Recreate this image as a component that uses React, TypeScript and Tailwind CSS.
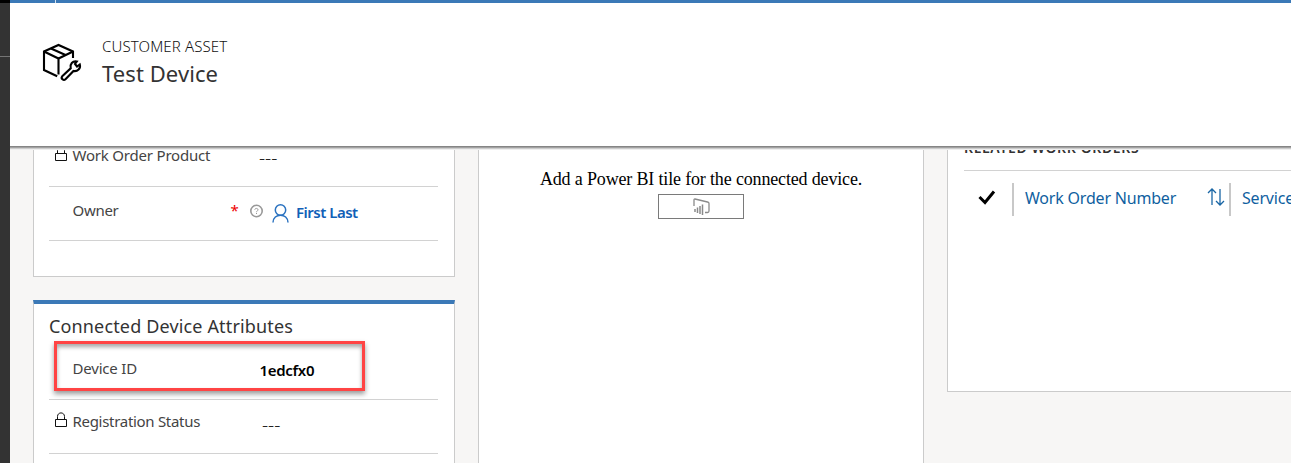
import type { ReactNode } from "react";

function AssetIcon() {
  return (
    <svg width="40" height="40" viewBox="0 0 40 40" fill="none" stroke="#000" strokeWidth="2.100" className="mt-[1px] shrink-0">
      <path d="M15.200 33.200 L2 27 V8.500 L16.500 2 L31 8.500 V15" />
      <path d="M2 8.500 L16.500 15.500 L31 8.500 M16.500 15.500 V31.500 M9 5.500 L23.500 12" />
      <path d="M20.200 33.300 L28.700 25.300 C27.700 21 30.500 17.800 34.800 18.500 L33 21 L35 23.500 L37.800 21.500 C39 25.500 35.500 28.800 31.500 28 L23.500 36.300 C21.500 38 18.500 35.500 20.200 33.300 Z" />
    </svg>
  );
}

function LockIcon() {
  return (
    <svg width="13" height="16" viewBox="0 0 13 16" fill="none" stroke="#111" className="mt-[1px] shrink-0">
      <path d="M1.500 7.500 H12.500 V14.500 H1.500 Z" />
      <path d="M3.500 7.500 V4.500 C3.500 -0.300 10.500 -0.300 10.500 4.500 V7.500" />
    </svg>
  );
}

function Dashes() {
  return <span className="text-[19px] leading-5 font-light text-[#222]">---</span>;
}

function Row({ label, locked, className, labelClass, children }: { label: string; locked?: boolean; className: string; labelClass: string; children: ReactNode }) {
  return (
    <div className={`flex border-b border-[#d2d2d2] pl-[5px] ${className}`}>
      <div className="w-[18px] shrink-0">{locked && <LockIcon />}</div>
      <div className="w-[155px] shrink-0 pl-[0.500px] text-[15px] leading-5 text-[#444]">
        <span className={labelClass}>{label}</span>
      </div>
      {children}
    </div>
  );
}

export default function App() {
  return (
    <div className="flex h-[463px] w-full overflow-hidden bg-[#f7f6f5] font-['Noto_Sans','Open_Sans',sans-serif] whitespace-nowrap">
      <aside className="flex w-[10px] shrink-0 flex-col bg-[#333]">
        <div className="h-[3px] bg-black" />
        <div className="mt-[53px] h-px bg-[#757575]" />
      </aside>
      <div className="flex min-w-0 flex-1 flex-col">
        <header className="z-10 h-[147px] shrink-0 border-b border-[#858585] bg-white shadow-[0_1px_0_#a2a2a2,0_2px_0_#cccccc,0_3px_0_#eeeeee]">
          <div className="flex h-[3px] bg-[#3b79b7]">
            <div className="ml-[45px] w-px bg-[#d5e3f0]" />
          </div>
          <div className="flex pt-[39px] pl-8">
            <AssetIcon />
            <div className="ml-5 -mt-[6px]">
              <div className="text-[15px] leading-5 text-[#111]"><span className="font-light tracking-[0.120px]">CUSTOMER ASSET</span></div>
              <h1 className="mt-[2px] text-[22px] leading-[30px] text-[#333]"><span className="tracking-[0.080px]">Test Device</span></h1>
            </div>
          </div>
        </header>
        <main className="flex h-[316px] gap-[23px] pl-[23px]">
          <div className="flex w-[422px] shrink-0 flex-col gap-[23px]">
            <section className="h-[130px] border border-t-0 border-[#cbcbcb] bg-white pr-4 pl-[15px]">
              <div className="flex h-[40px] flex-col">
                <Row label="Work Order Product" locked className="-mt-[2px] h-[42px]" labelClass="tracking-[-0.200px]">
                  <div className="ml-8 pt-[1px]"><Dashes /></div>
                </Row>
              </div>
              <Row label="Owner" className="h-[54px] pt-[13px]" labelClass="tracking-[-0.300px]">
                <span className="ml-[3px] w-[17px] pl-[0.500px] text-[15px] leading-5 text-[#e00]">*</span>
                <svg width="14" height="14" viewBox="0 0 14 14" fill="none" stroke="#999" className="mt-[4px] ml-[2px] shrink-0">
                  <circle cx="7.500" cy="7" r="5.700" strokeWidth="1.600" />
                  <path d="M5.800 5.700 C5.700 4 9.200 4 9 5.800 C8.800 7 7.500 7 7.500 8.200 M7.500 9 V10" />
                </svg>
                <svg width="17" height="19" viewBox="0 0 17 19" fill="none" stroke="#2a72c0" strokeWidth="1.500" className="mt-[4px] ml-[9px] shrink-0">
                  <circle cx="8.500" cy="6" r="5.200" />
                  <path d="M1 18.500 C1 8.700 16 8.700 16 18.500" />
                </svg>
                <a className="ml-[7px] pt-[2px] text-[15px] leading-5 font-semibold text-[#1160b7]"><span className="tracking-[-0.500px]">First Last</span></a>
              </Row>
            </section>
            <section className="h-[163px] border-x border-t-4 border-x-[#cbcbcb] border-t-[#3b79b7] bg-white pr-4 pl-[15px]">
              <h2 className="pt-[10px] text-[18px] leading-6 text-[#333]"><span className="tracking-[0.150px]">Connected Device Attributes</span></h2>
              <div className="relative">
                <div className="pointer-events-none absolute top-[3px] left-[5px] h-[50px] w-[311px] border-3 border-[#ff4444] shadow-[0_3px_5px_rgba(0,0,0,0.4),inset_0_3px_4px_rgba(0,0,0,0.35)]" />
                <Row label="Device ID" className="h-[62px] pt-[20px]" labelClass="tracking-[-0.200px]">
                  <span className="ml-8 pt-[2px] pl-[0.500px] text-[15px] leading-5 font-semibold text-black"><span className="tracking-[-0.300px]">1edcfx0</span></span>
                </Row>
              </div>
              <Row label="Registration Status" locked className="h-[54px] pt-[11px]" labelClass="tracking-[-0.300px]">
                <div className="ml-[35px] pt-[2px]"><Dashes /></div>
              </Row>
            </section>
          </div>
          <section className="flex w-[446px] shrink-0 flex-col items-center border-x border-[#cbcbcb] bg-white pt-[22px] text-black">
            <p className="font-['Liberation_Serif',serif] text-[18px] leading-5 tracking-[-0.160px]">Add a Power BI tile for the connected device.</p>
            <button className="mt-[5px] flex h-[25px] w-[86px] items-center justify-center border border-[#7a7a7a] bg-white">
              <svg width="17" height="17" viewBox="0 0 17 17" fill="none" stroke="#8a8a8a" className="shrink-0">
                <path d="M1 8 V2 Q1 0.800 2 1 L14.500 4 Q16 4.400 16 5.500 V13 Q16 14.500 14.500 14.500 H12" strokeWidth="1.300" />
                <path d="M2 11 V14 M4.500 9.500 V15 M7 8 V16 M9.500 6.500 V17" strokeWidth="1.500" />
              </svg>
            </button>
          </section>
          <section className="h-[245px] min-w-0 flex-1 overflow-hidden border-b border-l border-[#cbcbcb] bg-white pl-4">
            <div className="flex h-6 border-b border-[#d2d2d2]">
              <h3 className="-mt-[9px] text-[14px] leading-5 font-semibold text-[#333]"><span className="tracking-[0.630px]">RELATED WORK ORDERS</span></h3>
            </div>
            <div className="flex pt-3">
              <svg width="18" height="16" viewBox="0 0 18 16" fill="none" stroke="#000" strokeWidth="3" className="mt-[7px] ml-[14px] shrink-0">
                <path d="M1.500 7 L7 12.500 L16 1.500" />
              </svg>
              <div className="ml-4 flex h-[33px] w-[217px] shrink-0 border-l-2 border-[#c8c8c8] pt-[3px] text-[16px] leading-6 text-[#105f9f]">
                <span className="ml-[11px] w-[182px] shrink-0 tracking-[-0.200px]">Work Order Number</span>
                <svg width="18" height="18" viewBox="0 0 18 18" fill="none" stroke="#1966a5" strokeWidth="1.300" className="mt-[2px] shrink-0">
                  <path d="M5 17 V1 M1 5 L5 1 L9 5 M13 1 V17 M9 13 L13 17 L17 13" />
                </svg>
              </div>
              <div className="h-[33px] shrink-0 border-l-2 border-[#c8c8c8] pt-[3px] pl-[11px] text-[16px] leading-6 text-[#105f9f]"><span className="tracking-[-0.200px]">Service</span></div>
            </div>
          </section>
        </main>
      </div>
    </div>
  );
}
